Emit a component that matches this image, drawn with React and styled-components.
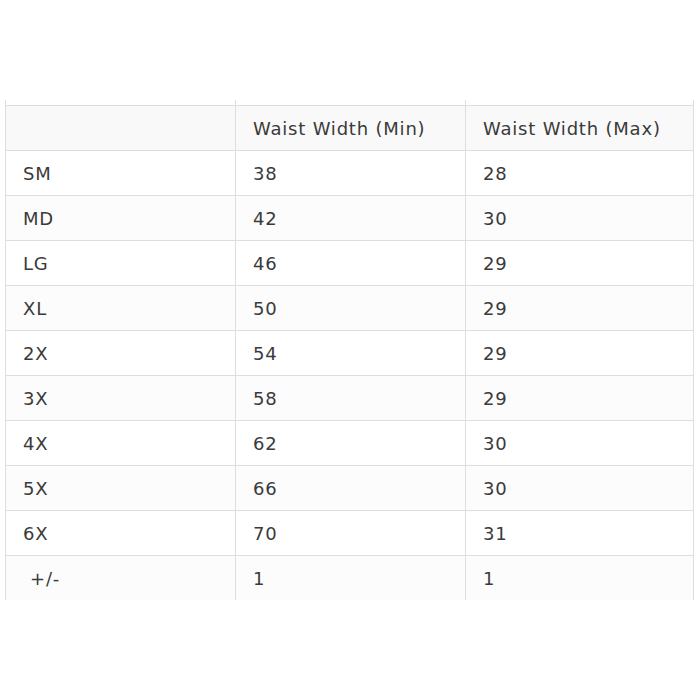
import React from 'react';
import styled, { createGlobalStyle } from 'styled-components';

const GlobalStyle = createGlobalStyle`
  html, body {
    margin: 0;
    padding: 0;
    background: #ffffff;
  }
`;

const rows = [
  ['SM', '38', '28'],
  ['MD', '42', '30'],
  ['LG', '46', '29'],
  ['XL', '50', '29'],
  ['2X', '54', '29'],
  ['3X', '58', '29'],
  ['4X', '62', '30'],
  ['5X', '66', '30'],
  ['6X', '70', '31'],
  ['+/-', '1', '1'],
];

const Page = styled.div`
  width: 700px;
  height: 700px;
  padding: 100px 0 0 5px;
  box-sizing: border-box;
  font-family: 'DejaVu Sans', 'Open Sans', sans-serif;
`;

const Grid = styled.div`
  display: grid;
  grid-template-columns: 230px 230px 229px;
  width: 690px;
`;

const Cell = styled.div`
  box-sizing: border-box;
  height: ${(p) => (p.$spacer ? '5px' : '45px')};
  display: flex;
  align-items: center;
  padding-left: ${(p) => (p.$indent ? '24px' : '17px')};
  border-left: 1px solid #dedede;
  border-right: ${(p) => (p.$last ? '1px solid #dedede' : 'none')};
  border-top: ${(p) => (p.$spacer ? 'none' : '1px solid #dedede')};
  background: ${(p) => p.$bg || '#ffffff'};
  color: #3a3a3a;
  font-size: 18px;
  letter-spacing: 0.8px;
`;

export default function App() {
  return (
    <Page>
      <GlobalStyle />
      <Grid>
        <Cell $spacer />
        <Cell $spacer />
        <Cell $spacer $last />
        <Cell $bg="#f9f9f9" />
        <Cell $bg="#f9f9f9">Waist Width (Min)</Cell>
        <Cell $bg="#f9f9f9" $last>Waist Width (Max)</Cell>
        {rows.map((r, i) => {
          const bg = i % 2 === 1 ? '#fcfcfc' : '#ffffff';
          return (
            <React.Fragment key={r[0]}>
              <Cell $bg={bg} $indent={r[0] === '+/-'}>{r[0]}</Cell>
              <Cell $bg={bg}>{r[1]}</Cell>
              <Cell $bg={bg} $last>{r[2]}</Cell>
            </React.Fragment>
          );
        })}
      </Grid>
    </Page>
  );
}
